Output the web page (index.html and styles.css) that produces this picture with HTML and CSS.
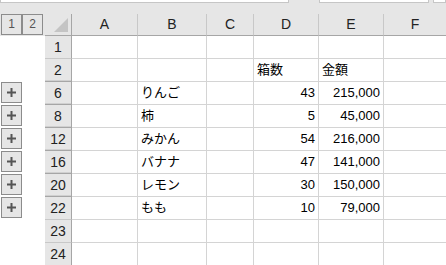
FILE: index.html
```html
<!DOCTYPE html>
<html lang="ja">
<head>
<meta charset="UTF-8">
<title>Sheet</title>
<link rel="stylesheet" href="styles.css">
</head>
<body>
<div class="topbar">
  <div class="box name-box"></div>
  <div class="box formula-box"></div>
  <div class="box side-box"></div>
</div>

<div class="sheet">
  <div class="levels"><span class="lvl">1</span><span class="lvl">2</span></div>
  <div class="corner"><span class="tri"></span></div>
  <div class="ch">A</div>
  <div class="ch">B</div>
  <div class="ch">C</div>
  <div class="ch">D</div>
  <div class="ch">E</div>
  <div class="ch last">F</div>

  <!-- row 1 -->
  <div class="ol"></div>
  <div class="rh">1</div>
  <div class="c"></div><div class="c"></div><div class="c"></div><div class="c"></div><div class="c"></div><div class="c last"></div>

  <!-- row 2 -->
  <div class="ol"></div>
  <div class="rh hid">2</div>
  <div class="c"></div><div class="c"></div><div class="c"></div><div class="c">箱数</div><div class="c">金額</div><div class="c last"></div>

  <div class="ol"><span class="plus"><svg width="9" height="9" viewBox="0 0 9 9"><path d="M0 4.5H9M4.5 0V9" stroke="#555" stroke-width="2"/></svg></span></div>
  <div class="rh hid">6</div>
  <div class="c"></div><div class="c">りんご</div><div class="c"></div><div class="c num">43</div><div class="c num">215,000</div><div class="c last"></div>

  <div class="ol"><span class="plus"><svg width="9" height="9" viewBox="0 0 9 9"><path d="M0 4.5H9M4.5 0V9" stroke="#555" stroke-width="2"/></svg></span></div>
  <div class="rh hid">8</div>
  <div class="c"></div><div class="c">柿</div><div class="c"></div><div class="c num">5</div><div class="c num">45,000</div><div class="c last"></div>

  <div class="ol"><span class="plus"><svg width="9" height="9" viewBox="0 0 9 9"><path d="M0 4.5H9M4.5 0V9" stroke="#555" stroke-width="2"/></svg></span></div>
  <div class="rh hid">12</div>
  <div class="c"></div><div class="c">みかん</div><div class="c"></div><div class="c num">54</div><div class="c num">216,000</div><div class="c last"></div>

  <div class="ol"><span class="plus"><svg width="9" height="9" viewBox="0 0 9 9"><path d="M0 4.5H9M4.5 0V9" stroke="#555" stroke-width="2"/></svg></span></div>
  <div class="rh hid">16</div>
  <div class="c"></div><div class="c">バナナ</div><div class="c"></div><div class="c num">47</div><div class="c num">141,000</div><div class="c last"></div>

  <div class="ol"><span class="plus"><svg width="9" height="9" viewBox="0 0 9 9"><path d="M0 4.5H9M4.5 0V9" stroke="#555" stroke-width="2"/></svg></span></div>
  <div class="rh hid">20</div>
  <div class="c"></div><div class="c">レモン</div><div class="c"></div><div class="c num">30</div><div class="c num">150,000</div><div class="c last"></div>

  <div class="ol"><span class="plus"><svg width="9" height="9" viewBox="0 0 9 9"><path d="M0 4.5H9M4.5 0V9" stroke="#555" stroke-width="2"/></svg></span></div>
  <div class="rh">22</div>
  <div class="c"></div><div class="c">もも</div><div class="c"></div><div class="c num">10</div><div class="c num">79,000</div><div class="c last"></div>

  <div class="ol"></div>
  <div class="rh">23</div>
  <div class="c"></div><div class="c"></div><div class="c"></div><div class="c"></div><div class="c"></div><div class="c last"></div>

  <div class="ol"></div>
  <div class="rh">24</div>
  <div class="c"></div><div class="c"></div><div class="c"></div><div class="c"></div><div class="c"></div><div class="c last"></div>
</div>
</body>
</html>
```

FILE: styles.css
```css
*, *::before, *::after {
    box-sizing: border-box;
}
body {
    margin: 0;
    background: #ffffff;
    font-family: "Liberation Sans", "Noto Sans CJK JP", sans-serif;
    color: #000000;
    overflow: hidden;
}

/* formula bar remains at the very top */
.topbar {
    display: flex;
    height: 14px;
    background: #e6e6e6;
}
.box {
    height: 3px;
    background: #ffffff;
    border: 1px solid #c6c6c6;
    border-top: none;
}
.name-box {
    width: 289px;
}
.formula-box {
    width: 110px;
    margin-left: 30px;
}
.side-box {
    flex: 1;
    margin-left: 4px;
}

/* the grid */
.sheet {
    display: grid;
    grid-template-columns: 45px 27px 66px 69px 47px 65px 65px 1fr;
    grid-template-rows: 22px repeat(10, 23px);
}
.levels {
    background: #e6e6e6;
    display: flex;
    gap: 0;
    padding-left: 1px;
}
.lvl {
    width: 21px;
    height: 21px;
    border: 1px solid #8c8c8c;
    background: #e6e6e6;
    color: #555555;
    font-size: 12px;
    line-height: 19px;
    text-align: center;
}
.corner {
    background: #e6e6e6;
    border-right: 1px solid #a6a6a6;
    border-bottom: 1px solid #a6a6a6;
    display: flex;
    justify-content: flex-end;
    align-items: flex-end;
    padding: 0 3px 3px 0;
}
.tri {
    width: 0;
    height: 0;
    border-left: 14px solid transparent;
    border-bottom: 14px solid #c4c4c4;
}
.ch {
    background: #e6e6e6;
    border-right: 1px solid #c8c8c8;
    border-bottom: 1px solid #a6a6a6;
    text-align: center;
    font-size: 14px;
    line-height: 21px;
    color: #222222;
}
.ch.last {
    border-right: none;
}
.ol {
    padding-left: 1px;
}
.plus {
    display: flex;
    align-items: center;
    justify-content: center;
    width: 21px;
    height: 21px;
    border: 1px solid #8c8c8c;
    background: #e6e6e6;
}
.rh {
    background: #e6e6e6;
    border-right: 1px solid #a6a6a6;
    border-bottom: 1px solid #c8c8c8;
    text-align: center;
    font-size: 14px;
    line-height: 22px;
    color: #222222;
}
.rh.hid {
    border-bottom-color: #a6a6a6;
    box-shadow: inset 0 -1px 0 #d0d0d0;
}
.c {
    border-right: 1px solid #d4d4d4;
    border-bottom: 1px solid #d4d4d4;
    font-size: 13px;
    line-height: 22px;
    padding: 0 3px;
    white-space: nowrap;
}
.c.last {
    border-right: none;
}
.num {
    text-align: right;
}
```
